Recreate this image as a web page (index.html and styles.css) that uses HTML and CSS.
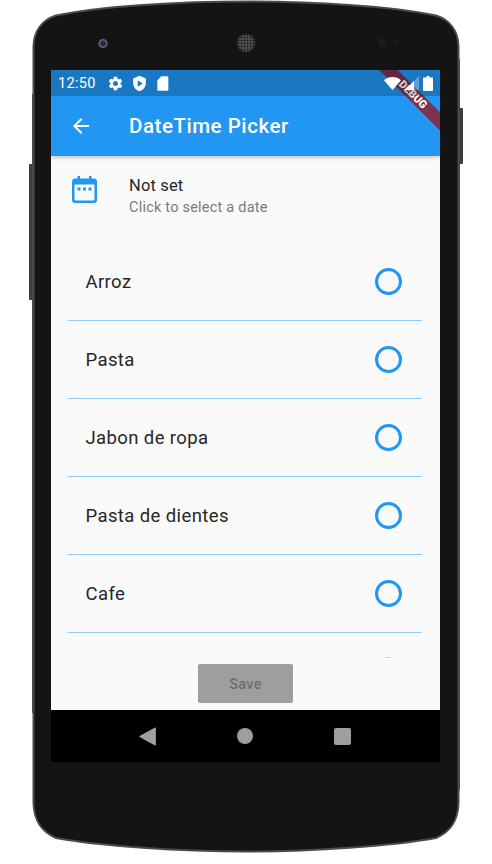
FILE: index.html
```html
<!DOCTYPE html>
<html lang="en">

<head>
    <meta charset="UTF-8">
    <meta name="viewport" content="width=device-width, initial-scale=1.0">
    <title>DateTime Picker</title>
    <link rel="stylesheet" href="styles.css">
</head>

<body>
<div class="stage">
    <!-- phone body, buttons, camera, speaker -->
    <svg class="shell" width="492" height="864" viewBox="0 0 492 864">
        <defs>
            <pattern id="grille" width="3" height="3" patternUnits="userSpaceOnUse">
                <rect width="3" height="3" fill="#555"/>
                <circle cx="1.5" cy="1.5" r="1" fill="#161616"/>
            </pattern>
            <radialGradient id="lens">
                <stop offset="0" stop-color="#2626a8"/>
                <stop offset="0.35" stop-color="#1c1c34"/>
                <stop offset="0.75" stop-color="#6c6c70"/>
                <stop offset="1" stop-color="#262626"/>
            </radialGradient>
            <radialGradient id="grille-fade">
                <stop offset="0.7" stop-color="#fff"/>
                <stop offset="1" stop-color="#333"/>
            </radialGradient>
            <mask id="grille-mask">
                <circle cx="246" cy="43" r="10" fill="url(#grille-fade)"/>
            </mask>
        </defs>
        <rect x="29" y="164" width="6" height="136" rx="1" fill="#3c3c3c"/>
        <rect x="457" y="108" width="6" height="56" rx="1" fill="#3c3c3c"/>
        <rect x="32" y="94" width="3" height="619" fill="#4b4b4b"/>
        <rect x="457" y="59" width="3" height="731" fill="#4b4b4b"/>
        <path class="body" d="M33.5 46C34 31 42 20 56 15.500C100 6 180 1.500 246 1.500C312 1.500 392 6 436 15.500C450 20 458 31 458.500 46L458.500 803C458 822 450 832 436 838C392 846 312 851.500 246 851.500C180 851.500 100 846 56 838C42 832 34 822 33.500 803Z"/>
        <circle cx="103" cy="43.500" r="5" fill="url(#lens)"/>
        <circle cx="246" cy="43" r="10" fill="url(#grille)" mask="url(#grille-mask)"/>
        <circle cx="382" cy="42" r="4" fill="#1d1d1d"/>
        <circle cx="395" cy="42.500" r="2" fill="#1d1d1d"/>
    </svg>

    <div class="screen">
        <div class="debug-banner">DEBUG</div>

        <header class="top-bar">
            <div class="status-bar">
                <span class="clock">12:50</span>
                <svg class="status-icon" width="17" height="17" viewBox="0 0 24 24">
                    <path d="M19.14 12.94c.04-.3.06-.61.06-.94 0-.32-.02-.64-.07-.94l2.03-1.58c.18-.14.23-.41.12-.61l-1.92-3.32c-.12-.22-.37-.29-.59-.22l-2.39.96c-.5-.38-1.03-.7-1.62-.94l-.36-2.54c-.04-.24-.24-.41-.48-.41h-3.84c-.24 0-.43.17-.47.41l-.36 2.54c-.59.24-1.13.57-1.62.94l-2.39-.96c-.22-.08-.47 0-.59.22L2.74 8.87c-.12.21-.08.47.12.61l2.03 1.58c-.05.3-.09.63-.09.94s.02.64.07.94l-2.03 1.58c-.18.14-.23.41-.12.61l1.92 3.32c.12.22.37.29.59.22l2.39-.96c.5.38 1.03.7 1.62.94l.36 2.54c.05.24.24.41.48.41h3.84c.24 0 .44-.17.47-.41l.36-2.54c.59-.24 1.13-.56 1.62-.94l2.39.96c.22.08.47 0 .59-.22l1.92-3.32c.12-.22.07-.47-.12-.61l-2.01-1.58zM12 15.600c-1.980 0-3.600-1.620-3.600-3.600s1.620-3.600 3.600-3.600 3.600 1.620 3.600 3.600-1.620 3.600-3.600 3.600z"/>
                </svg>
                <svg class="status-icon" width="17" height="17" viewBox="0 0 24 24">
                    <path fill-rule="evenodd" d="M12 1L3 5v6c0 5.550 3.840 10.740 9 12 5.160-1.260 9-6.450 9-12V5l-9-4zM9.500 7.500l7 4.500-7 4.500z"/>
                </svg>
                <svg class="status-icon" width="16" height="17" viewBox="0 0 24 24">
                    <path d="M18 1h-8.500L3.500 7v14c0 1.100.9 2 2 2H18c1.100 0 2-.9 2-2V3c0-1.100-.9-2-2-2z"/>
                </svg>
                <div class="status-right">
                    <svg class="status-icon" width="17" height="13" viewBox="0 0 17 13">
                        <path d="M8.500 13L0 3.200C2.300 1.200 5.300 0 8.500 0s6.200 1.200 8.500 3.200z"/>
                    </svg>
                    <svg class="status-icon" width="14" height="14" viewBox="0 0 14 14">
                        <path opacity="0.3" d="M0 14L14 0v14z"/>
                        <path d="M0 14l9-9v9z"/>
                    </svg>
                    <svg class="status-icon" width="10" height="15" viewBox="0 0 10 15">
                        <path d="M3.500 0h3v1.500H9c.6 0 1 .4 1 1V14c0 .6-.4 1-1 1H1c-.6 0-1-.4-1-1V2.500c0-.6.4-1 1-1h2.500z"/>
                    </svg>
                </div>
            </div>
            <div class="toolbar">
                <svg class="back-arrow" width="24" height="24" viewBox="0 0 24 24">
                    <path d="M20 11H7.830l5.590-5.590L12 4l-8 8 8 8 1.410-1.410L7.830 13H20v-2z"/>
                </svg>
                <h1 class="title">DateTime Picker</h1>
            </div>
        </header>

        <main class="content">
            <div class="date-row">
                <svg class="calendar" width="25" height="27" viewBox="0 0 25 27">
                    <path d="M5.500 0H8v2.500h9V0h2.500v2.500H22c1.700 0 3 1.300 3 3V24c0 1.700-1.300 3-3 3H3c-1.700 0-3-1.300-3-3V5.500c0-1.700 1.300-3 3-3h2.500zM2.500 8.500V23.500c0 .6.400 1 1 1h18c.6 0 1-.4 1-1V8.500z"/>
                    <rect x="5.500" y="11.500" width="3" height="3"/>
                    <rect x="11" y="11.500" width="3" height="3"/>
                    <rect x="16.500" y="11.500" width="3" height="3"/>
                </svg>
                <div class="date-text">
                    <div class="date-value">Not set</div>
                    <div class="date-hint">Click to select a date</div>
                </div>
            </div>

            <ul class="items">
                <li class="item"><span class="item-name">Arroz</span><span class="radio"></span></li>
                <li class="item"><span class="item-name">Pasta</span><span class="radio"></span></li>
                <li class="item"><span class="item-name">Jabon de ropa</span><span class="radio"></span></li>
                <li class="item"><span class="item-name">Pasta de dientes</span><span class="radio"></span></li>
                <li class="item"><span class="item-name">Cafe</span><span class="radio"></span></li>
                <li class="item"><span class="item-name"></span><span class="radio"></span></li>
            </ul>

            <div class="actions">
                <button class="save-btn" disabled>Save</button>
            </div>
        </main>

        <nav class="nav-bar">
            <svg width="17" height="19" viewBox="0 0 17 19">
                <path d="M16 .6c.4-.2.9.1.9.6v16.600c0 .5-.5.8-.9.6L.5 10c-.4-.2-.4-.8 0-1z"/>
            </svg>
            <svg width="16" height="16" viewBox="0 0 16 16">
                <circle cx="8" cy="8" r="8"/>
            </svg>
            <svg width="17" height="17" viewBox="0 0 17 17">
                <rect width="17" height="17" rx="2"/>
            </svg>
        </nav>
    </div>
</div>
</body>

</html>
```
FILE: styles.css
```css
* {
    padding: 0;
    margin: 0;
    box-sizing: border-box;
}

html,
body {
    background-color: #fff;
}

body {
    font-family: Roboto, "Liberation Sans", sans-serif;
    overflow: hidden;
}

.stage {
    position: relative;
    width: 492px;
    height: 864px;
    padding: 70px 52px 102px 51px;
}

.shell {
    position: absolute;
    top: 0;
    left: 0;
}

.body {
    fill: #141414;
    stroke: #4b4b4b;
    stroke-width: 2;
}

.screen {
    position: relative;
    display: flex;
    flex-direction: column;
    width: 389px;
    height: 692px;
    overflow: hidden;
    background-color: #fafafa;
}

/* ribbon sits under the status bar, over the app bar */
.debug-banner {
    position: absolute;
    top: 18px;
    left: 302px;
    z-index: 2;
    width: 120px;
    height: 13px;
    background-color: #7c3350;
    color: #fff;
    font-size: 10.900px;
    font-weight: 900;
    line-height: 13px;
    text-align: center;
    transform: rotate(45deg);
}

.top-bar {
    position: relative;
    background-color: #2196f3;
    box-shadow: 0 2px 4px rgba(0, 0, 0, 0.2);
}

.status-bar {
    position: relative;
    z-index: 3;
    display: flex;
    align-items: center;
    height: 26px;
    padding: 0 7px 0 7px;
    background-color: rgba(0, 0, 0, 0.2);
    color: #fff;
}

.clock {
    width: 49px;
    font-size: 14.500px;
    letter-spacing: 0.35px;
}

.status-icon {
    fill: #fff;
    margin-right: 7px;
}

.status-right {
    display: flex;
    align-items: center;
    margin-left: auto;
}

.status-right .status-icon {
    margin-right: 0;
    margin-left: 4px;
}

.toolbar {
    display: flex;
    align-items: center;
    height: 60px;
    padding-left: 18px;
    color: #fff;
}

.back-arrow {
    fill: #fff;
}

.title {
    margin-left: 36px;
    font-size: 20.500px;
    font-weight: 500;
    letter-spacing: 0.54px;
}

.content {
    display: flex;
    flex: 1;
    flex-direction: column;
    min-height: 0;
}

.date-row {
    display: flex;
    height: 87px;
    padding: 20px 0 0 21px;
}

.calendar {
    fill: #2196f3;
}

.date-text {
    margin-left: 32px;
}

.date-value {
    color: #262626;
    font-size: 16.500px;
    line-height: 20px;
    letter-spacing: 0.15px;
}

.date-hint {
    margin-top: 2px;
    color: #7a7a7a;
    font-size: 14.500px;
    line-height: 20px;
    letter-spacing: 0.22px;
}

.items {
    flex: none;
    height: 415px;
    margin: 0 18px 0 17px;
    overflow: hidden;
    list-style: none;
}

.item {
    display: flex;
    align-items: center;
    justify-content: space-between;
    height: 78px;
    padding: 0 20px 0 18px;
    border-bottom: 1px solid #90caf9;
}

.item-name {
    margin-left: -0.5px;
    padding-top: 1px;
    color: #262626;
    font-size: 18.500px;
    letter-spacing: 0.39px;
}

.radio {
    width: 27px;
    height: 27px;
    border: 3px solid #2196f3;
    border-radius: 50%;
}

/* only the top of the next row's radio shows above the button */
.item:last-child .radio {
    transform: translateY(-0.5px);
}

.actions {
    display: flex;
    justify-content: center;
    padding-top: 6px;
}

.save-btn {
    width: 95px;
    height: 39px;
    padding-top: 2px;
    border: 0;
    border-radius: 2px;
    background-color: #9e9e9e;
    color: #6e6e6e;
    font-family: inherit;
    font-size: 14.500px;
    font-weight: 500;
    letter-spacing: 0.3px;
}

.nav-bar {
    display: flex;
    flex: none;
    align-items: center;
    height: 52px;
    padding-left: 88px;
    gap: 81px;
    background-color: #000;
    fill: #9e9e9e;
}
```
